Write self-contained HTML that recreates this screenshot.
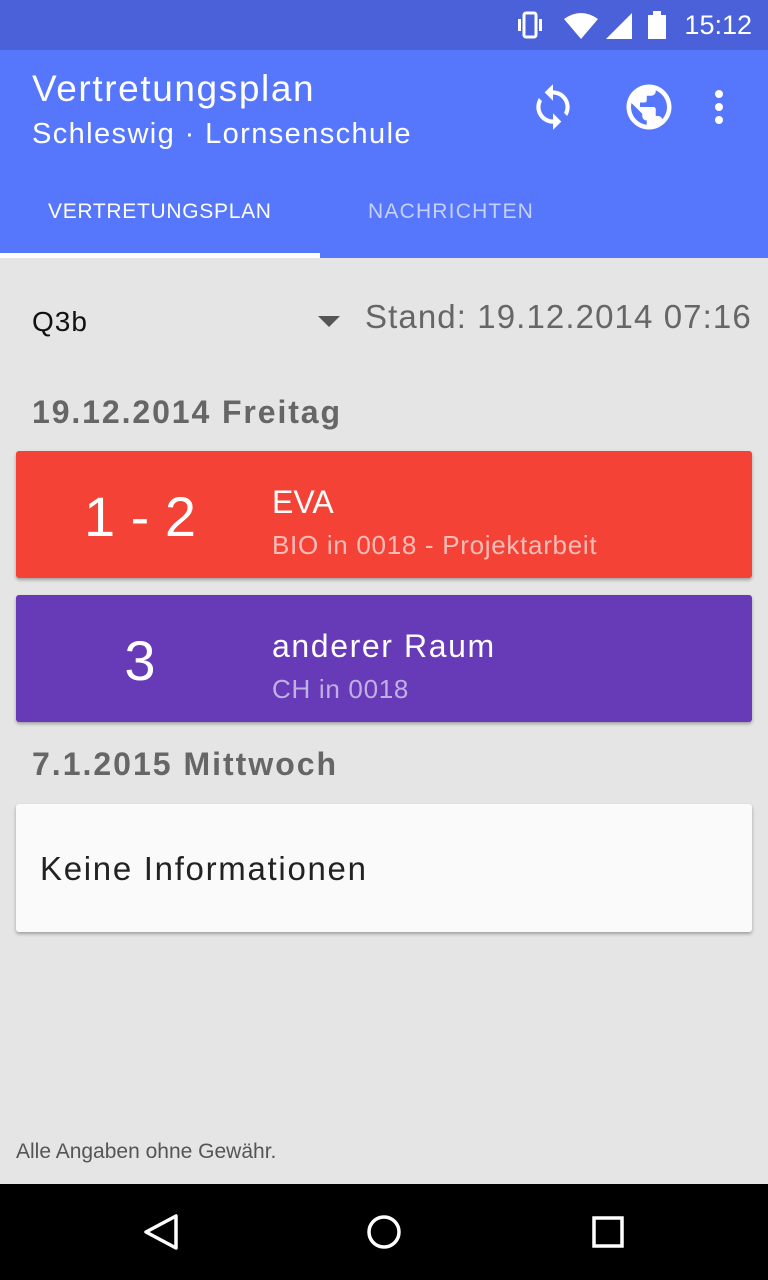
<!DOCTYPE html>
<html><head><meta charset="utf-8"><style>
*{margin:0;padding:0;box-sizing:border-box}
body{width:768px;height:1280px;overflow:hidden;background:#e5e5e5;font-family:"Liberation Sans",sans-serif;position:relative}
.abs{position:absolute;white-space:nowrap}
</style></head><body>
<div class="abs" style="left:0;top:0;width:768px;height:50px;background:#4a61d9"></div>
<div class="abs" style="right:16px;top:10px;color:#fff;font-size:27px">15:12</div>
<svg class="abs" style="left:516px;top:10px" width="150" height="30" viewBox="0 0 150 30">
<rect x="8" y="3" width="12" height="24" rx="2" fill="none" stroke="#fff" stroke-width="3"/>
<rect x="2" y="9" width="3" height="12" fill="#fff"/><rect x="23" y="9" width="3" height="12" fill="#fff"/>
<path d="M48 9 Q65 -3 82 9 L65 29 Z" fill="#fff"/>
<path d="M90 29 L116 29 L116 3 Z" fill="#fff"/>
<rect x="132" y="5" width="18" height="24" fill="#fff"/><rect x="137" y="1" width="8" height="4" fill="#fff"/>
</svg>
<div class="abs" style="left:0;top:50px;width:768px;height:208px;background:#5677fc"></div>
<div class="abs" style="left:32px;top:68px;color:#fff;font-size:37px;letter-spacing:1.6px">Vertretungsplan</div>
<div class="abs" style="left:32px;top:118px;color:#fff;font-size:29px;letter-spacing:1.4px">Schleswig · Lornsenschule</div>
<svg class="abs" style="left:528px;top:82px" width="50" height="50" viewBox="0 0 24 24"><path fill="#fff" d="M12 4V1L8 5l4 4V6c3.3 0 6 2.7 6 6 0 1-.3 2-.7 2.8l1.5 1.5C19.5 15 20 13.6 20 12c0-4.4-3.6-8-8-8zm0 14c-3.3 0-6-2.7-6-6 0-1 .3-2 .7-2.8L5.2 7.7C4.5 9 4 10.4 4 12c0 4.4 3.6 8 8 8v3l4-4-4-4v3z"/></svg>
<svg class="abs" style="left:622px;top:80px" width="54" height="54" viewBox="0 0 24 24"><path fill="#fff" d="M12 2C6.5 2 2 6.5 2 12s4.5 10 10 10 10-4.5 10-10S17.5 2 12 2zm-1 17.9c-4-.5-7-3.900-7-7.900 0-.6.1-1.200.2-1.800L9 15v1c0 1.100.9 2 2 2v1.900zm6.900-2.500c-.3-.8-1-1.400-1.900-1.400h-1v-3c0-.6-.4-1-1-1H8v-2h2c.6 0 1-.4 1-1V7h2c1.100 0 2-.9 2-2v-.4c2.900 1.200 5 4.100 5 7.400 0 2.100-.8 4-2.100 5.400z"/></svg>
<div class="abs" style="left:715px;top:90px;width:8px;height:8px;border-radius:4px;background:#fff;box-shadow:0 13px 0 #fff,0 26px 0 #fff"></div>
<div class="abs" style="left:48px;top:200px;color:#fff;font-size:21px;letter-spacing:0.7px">VERTRETUNGSPLAN</div>
<div class="abs" style="left:368px;top:200px;color:#c5d0fd;font-size:21px;letter-spacing:1.2px">NACHRICHTEN</div>
<div class="abs" style="left:0;top:253px;width:320px;height:5px;background:#fff"></div>
<div class="abs" style="left:32px;top:306px;font-size:28px;color:#111;letter-spacing:1px">Q3b</div>
<div class="abs" style="left:318px;top:316px;width:0;height:0;border-left:11px solid transparent;border-right:11px solid transparent;border-top:11px solid #555"></div>
<div class="abs" style="left:365px;top:298px;font-size:33px;color:#666;letter-spacing:1.1px">Stand: 19.12.2014 07:16</div>
<div class="abs" style="left:32px;top:394px;font-size:32px;color:#666;font-weight:bold;letter-spacing:1.9px">19.12.2014 Freitag</div>
<div class="abs" style="left:16px;top:451px;width:736px;height:127px;background:#f44336;border-radius:3px;box-shadow:0 2px 3px rgba(0,0,0,.3)"></div>
<div class="abs" style="left:16px;top:484px;width:248px;text-align:center;color:#fff;font-size:56px">1 - 2</div>
<div class="abs" style="left:272px;top:484px;color:#fff;font-size:32px">EVA</div>
<div class="abs" style="left:272px;top:530px;color:#f9bdb8;font-size:26px;letter-spacing:0.7px">BIO in 0018 - Projektarbeit</div>
<div class="abs" style="left:16px;top:595px;width:736px;height:127px;background:#673ab7;border-radius:3px;box-shadow:0 2px 3px rgba(0,0,0,.3)"></div>
<div class="abs" style="left:16px;top:628px;width:248px;text-align:center;color:#fff;font-size:56px">3</div>
<div class="abs" style="left:272px;top:628px;color:#fff;font-size:32px;letter-spacing:1.6px">anderer Raum</div>
<div class="abs" style="left:272px;top:674px;color:#c2b0e2;font-size:26px;letter-spacing:0.7px">CH in 0018</div>
<div class="abs" style="left:32px;top:746px;font-size:32px;color:#666;font-weight:bold;letter-spacing:2px">7.1.2015 Mittwoch</div>
<div class="abs" style="left:16px;top:804px;width:736px;height:128px;background:#fafafa;border-radius:3px;box-shadow:0 2px 3px rgba(0,0,0,.3)"></div>
<div class="abs" style="left:40px;top:850px;font-size:33px;color:#222;letter-spacing:1.7px">Keine Informationen</div>
<div class="abs" style="left:16px;top:1140px;font-size:21px;color:#555">Alle Angaben ohne Gewähr.</div>
<div class="abs" style="left:0;top:1184px;width:768px;height:96px;background:#000"></div>
<svg class="abs" style="left:0;top:1184px" width="768" height="96"><path d="M176 32 L176 64 L146 48 Z" fill="none" stroke="#fff" stroke-width="3.5" stroke-linejoin="round"/><circle cx="384" cy="48" r="15" fill="none" stroke="#fff" stroke-width="3.5"/><rect x="594" y="34" width="28" height="28" fill="none" stroke="#fff" stroke-width="3.5"/></svg>
</body></html>
